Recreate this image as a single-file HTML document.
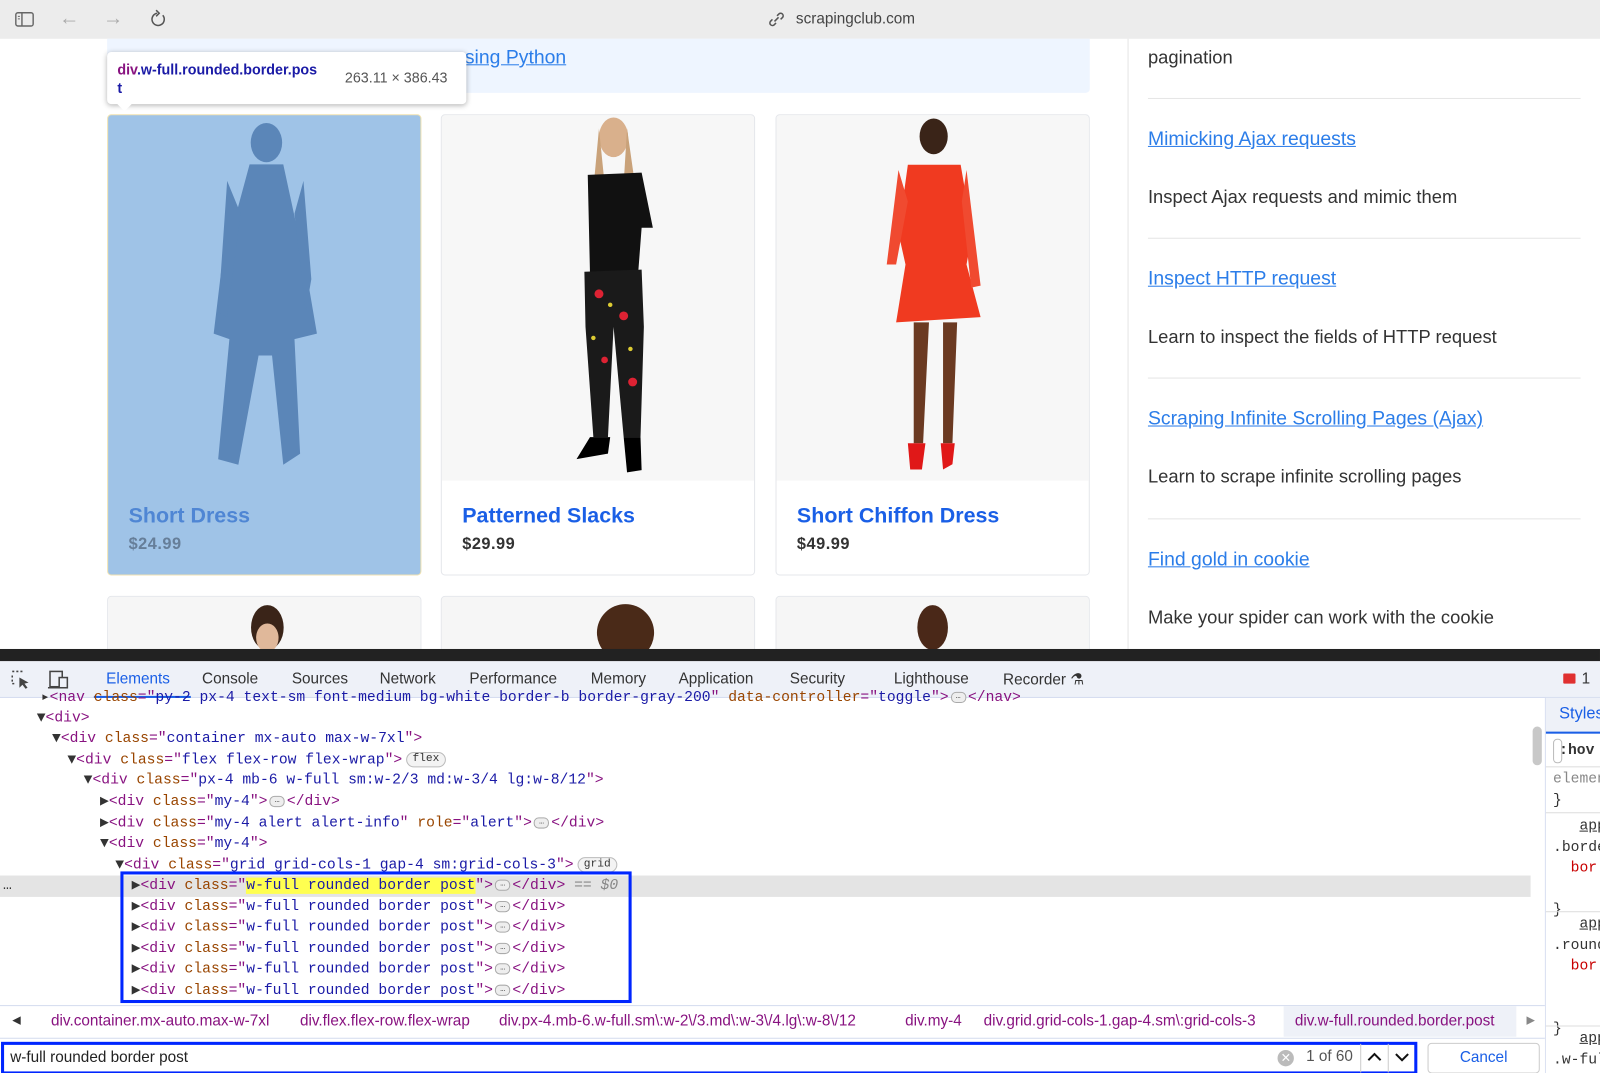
<!DOCTYPE html>
<html><head><meta charset="utf-8"><style>
*{margin:0;padding:0;box-sizing:border-box}
body{width:1600px;height:1073px;overflow:hidden;background:#fff;font-family:"Liberation Sans",sans-serif;position:relative}
#w{position:absolute;left:0;top:0;width:1568px;height:1052px;transform:scale(1.0204);transform-origin:0 0;overflow:hidden}
.a{position:absolute}
.top{left:0;top:0;width:1568px;height:38px;background:#ececec}
.card{position:absolute;border:1px solid #e5e7eb;border-radius:4px;background:#fff;overflow:hidden}
.img{position:absolute;left:0;top:0;right:0;height:358px;background:#f7f7f7}
.ttl{position:absolute;left:20px;top:381px;font-size:21px;font-weight:bold;color:#1a5fe6}
.pr{position:absolute;left:20px;top:412px;font-size:16px;font-weight:bold;color:#333;letter-spacing:.5px}
.side a{color:#2b7de9;text-decoration:underline;font-size:19px}
.sl{position:absolute;left:1125px;font-size:18px;color:#333}
.hr{position:absolute;left:1125px;width:424px;height:1px;background:#e5e5e5}
.tree{font-family:"Liberation Mono",monospace;font-size:14.4px;white-space:pre;line-height:20.5px}
.t{color:#881280}.at{color:#994500}.v{color:#1a1aa6}.g{color:#333}
.ln{position:absolute;height:20.5px}
.pill{display:inline-block;border:1px solid #bbb;border-radius:8px;font-size:11px;padding:0 5px;line-height:13px;color:#333;background:#f3f3f3;vertical-align:middle;margin-left:4px}
.dots{display:inline-block;width:15px;height:11px;border:1px solid #aaa;border-radius:5px;background:#eee;font-size:8px;line-height:7px;text-align:center;vertical-align:middle;color:#333;margin:0 2px}
.tab{position:absolute;top:657px;font-size:15px;color:#333}
.bc{position:absolute;top:992px;font-size:15px;color:#881280}
</style></head><body><div id="w">
<div class="a top"></div>
<svg class="a" style="left:14px;top:10px" width="22" height="18"><rect x="1.5" y="2.5" width="17" height="13" rx="2" fill="none" stroke="#666" stroke-width="1.4"/><line x1="7.5" y1="3" x2="7.5" y2="15" stroke="#666" stroke-width="1.4"/><line x1="3.5" y1="6" x2="5.5" y2="6" stroke="#666"/><line x1="3.5" y1="8.5" x2="5.5" y2="8.5" stroke="#666"/></svg>
<div class="a" style="left:58px;top:7px;font-size:20px;color:#aaa">←</div>
<div class="a" style="left:101px;top:7px;font-size:20px;color:#aaa">→</div>
<svg class="a" style="left:145px;top:9px" width="20" height="20"><path d="M14.5 6 A6 6 0 1 1 9 4" fill="none" stroke="#555" stroke-width="1.5"/><path d="M8 1 L11 4 L8 7" fill="none" stroke="#555" stroke-width="1.5"/></svg>
<svg class="a" style="left:752px;top:11px" width="18" height="16"><path d="M7 10 L11 6 M5 8 L3 10 a2.5 2.5 0 0 0 3.5 3.5 L8.5 11.5 M9.5 4.5 L11.5 2.5 a2.5 2.5 0 0 1 3.5 3.5 L13 8" fill="none" stroke="#555" stroke-width="1.5"/></svg>
<div class="a" style="left:780px;top:10px;font-size:15px;color:#444">scrapingclub.com</div>

<div class="a" style="left:105px;top:38px;width:963px;height:53px;background:#eef5ff;border-radius:0 0 4px 4px"></div>
<div class="a" style="left:445px;top:46px;font-size:19px;color:#2b7de9;text-decoration:underline">using Python</div>

<div class="card" style="left:105px;top:112px;width:308px;height:452px;background:#9fc3e7;border-color:#f0e2b0">
<svg width="308" height="358"><g fill="#5b86b8" transform="translate(154 0) scale(1.1 1.07) translate(-154 -10)"><ellipse cx="155" cy="35" rx="14" ry="18"/><path d="M140 55 L170 55 L190 150 L200 210 L180 215 L185 320 L170 330 L160 230 L148 230 L130 330 L112 325 L122 215 L108 210 L115 150Z"/><path d="M120 70 L112 190 L120 195 L132 100Z M188 70 L195 160 L190 190 L180 100Z"/></g></svg>
<div class="ttl" style="color:#4f86d4">Short Dress</div><div class="pr" style="color:#667e99">$24.99</div></div>
<div class="card" style="left:432px;top:112px;width:308px;height:452px">
<div class="img"><svg width="308" height="358"><g transform="translate(154 0) scale(1.1 1.08) translate(-150 -8)"><ellipse cx="163" cy="28" rx="13" ry="18" fill="#d9b08c"/><path d="M150 20 L145 75 L155 70Z M175 20 L182 70 L172 70Z" fill="#c9a27a"/><path d="M140 62 L188 60 L198 110 L188 110 L185 150 L142 152Z" fill="#111"/><path d="M137 150 L188 148 L190 200 L187 300 L172 300 L163 200 L158 300 L145 300 L138 200Z" fill="#1a1a1a"/><g fill="#d23"><circle cx="150" cy="170" r="4"/><circle cx="172" cy="190" r="4"/><circle cx="155" cy="230" r="3"/><circle cx="180" cy="250" r="4"/></g><g fill="#dc3"><circle cx="160" cy="180" r="2"/><circle cx="145" cy="210" r="2"/><circle cx="178" cy="220" r="2"/></g><path d="M142 300 L160 300 L158 315 L130 320Z M172 300 L187 300 L188 330 L175 332Z" fill="#000"/></g></svg></div>
<div class="ttl">Patterned Slacks</div><div class="pr">$29.99</div></div>
<div class="card" style="left:760px;top:112px;width:308px;height:452px">
<div class="img"><svg width="308" height="358"><g transform="translate(154 0) scale(1.15 1.03) translate(-152 -8)"><ellipse cx="152" cy="28" rx="12" ry="17" fill="#3a2418"/><path d="M130 55 L175 55 L185 120 L180 150 L192 200 L120 205 L128 150 L122 120Z" fill="#f03a20"/><path d="M122 60 L112 150 L120 150 L130 90Z M180 60 L192 170 L184 172 L176 90Z" fill="#f04a30"/><path d="M135 205 L148 205 L143 320 L135 320Z M160 205 L172 205 L168 320 L160 320Z" fill="#6b3a22"/><path d="M130 320 L145 320 L142 345 L132 345Z M158 320 L170 320 L168 340 L160 345Z" fill="#e01818"/></g></svg></div>
<div class="ttl">Short Chiffon Dress</div><div class="pr">$49.99</div></div>
<div class="card" style="left:105px;top:584px;width:308px;height:60px"><div class="img" style="background:#f6f6f6"><svg width="308" height="60"><ellipse cx="156" cy="30" rx="16" ry="22" fill="#3a2418"/><ellipse cx="156" cy="40" rx="11" ry="14" fill="#e0b89a"/></svg></div></div>
<div class="card" style="left:432px;top:584px;width:308px;height:60px"><div class="img" style="background:#f6f6f6"><svg width="308" height="60"><ellipse cx="180" cy="35" rx="28" ry="28" fill="#4a2a18"/></svg></div></div>
<div class="card" style="left:760px;top:584px;width:308px;height:60px"><div class="img" style="background:#f6f6f6"><svg width="308" height="60"><ellipse cx="153" cy="30" rx="15" ry="22" fill="#4a2818"/></svg></div></div>

<div class="a" style="left:105px;top:51px;width:352px;height:51px;background:#fff;border-radius:4px;box-shadow:0 1px 5px rgba(0,0,0,.3)"></div>
<div class="a" style="left:114px;top:101px;width:0;height:0;border-left:8px solid transparent;border-right:8px solid transparent;border-top:8px solid #fff"></div>
<div class="a" style="left:115px;top:59px;font-size:14px;font-weight:bold;line-height:18px;color:#1a1aa6"><span style="color:#881280">div</span>.w-full.rounded.border.pos<br>t</div>
<div class="a" style="left:338px;top:68px;font-size:14px;color:#555">263.11 × 386.43</div>

<div class="a" style="left:1105px;top:38px;width:1px;height:600px;background:#e5e5e5"></div>
<div class="side">
<div class="sl" style="top:46px">pagination</div>
<div class="hr" style="top:96px"></div>
<div class="sl" style="top:126px"><a>Mimicking Ajax requests</a></div>
<div class="sl" style="top:183px">Inspect Ajax requests and mimic them</div>
<div class="hr" style="top:233px"></div>
<div class="sl" style="top:263px"><a>Inspect HTTP request</a></div>
<div class="sl" style="top:320px">Learn to inspect the fields of HTTP request</div>
<div class="hr" style="top:370px"></div>
<div class="sl" style="top:400px"><a>Scraping Infinite Scrolling Pages (Ajax)</a></div>
<div class="sl" style="top:457px">Learn to scrape infinite scrolling pages</div>
<div class="hr" style="top:508px"></div>
<div class="sl" style="top:538px"><a>Find gold in cookie</a></div>
<div class="sl" style="top:595px">Make your spider can work with the cookie</div>
</div>

<div class="a" style="left:0;top:636px;width:1568px;height:12px;background:#222"></div>
<div class="a" style="left:0;top:648px;width:1568px;height:36px;background:#eef1f8;border-bottom:1px solid #d5dcef"></div>
<svg class="a" style="left:10px;top:656px" width="22" height="20"><path d="M2 2h2M6 2h2M10 2h2M2 6v2M2 10v2M2 14h2" stroke="#444" stroke-width="1.5"/><path d="M9 8 L9 18 L12 15 L15 19 L17 18 L14 14 L18 13Z" fill="#444"/></svg>
<svg class="a" style="left:46px;top:656px" width="22" height="20"><rect x="3" y="2" width="12" height="15" fill="none" stroke="#444" stroke-width="1.5"/><rect x="12" y="8" width="8" height="10" fill="#eef1f8" stroke="#444" stroke-width="1.5"/><line x1="1" y1="18" x2="12" y2="18" stroke="#444" stroke-width="1.5"/></svg>
<div class="tab" style="left:104px;color:#1a5fe6">Elements</div>
<div class="a" style="left:92px;top:682px;width:95px;height:2px;background:#1a5fe6"></div>
<div class="tab" style="left:198px">Console</div>
<div class="tab" style="left:286px">Sources</div>
<div class="tab" style="left:372px">Network</div>
<div class="tab" style="left:460px">Performance</div>
<div class="tab" style="left:579px">Memory</div>
<div class="tab" style="left:665px">Application</div>
<div class="tab" style="left:774px">Security</div>
<div class="tab" style="left:876px">Lighthouse</div>
<div class="tab" style="left:983px">Recorder ⚗</div>
<div class="a" style="left:1532px;top:660px;width:12px;height:10px;background:#e03030;border-radius:1px"></div>
<div class="a" style="left:1550px;top:657px;font-size:15px;color:#333">1</div>

<div class="a" style="left:0;top:858px;width:1500px;height:21px;background:#e4e4e4"></div>
<div class="a tree" style="left:6px;top:0">
<div class="ln" style="left:34px;top:674px"><span class="g">▸</span><span class="t">&lt;nav </span><span class="at">class</span><span class="t">="</span><span class="v">py-2 px-4 text-sm font-medium bg-white border-b border-gray-200</span><span class="t">" </span><span class="at">data-controller</span><span class="t">="</span><span class="v">toggle</span><span class="t">"&gt;</span><span class="dots">…</span><span class="t">&lt;/nav&gt;</span></div>
<div class="ln" style="left:30px;top:694px"><span class="g">▼</span><span class="t">&lt;div&gt;</span></div>
<div class="ln" style="left:45px;top:714px"><span class="g">▼</span><span class="t">&lt;div </span><span class="at">class</span><span class="t">="</span><span class="v">container mx-auto max-w-7xl</span><span class="t">"&gt;</span></div>
<div class="ln" style="left:60px;top:735px"><span class="g">▼</span><span class="t">&lt;div </span><span class="at">class</span><span class="t">="</span><span class="v">flex flex-row flex-wrap</span><span class="t">"&gt;</span><span class="pill">flex</span></div>
<div class="ln" style="left:76px;top:755px"><span class="g">▼</span><span class="t">&lt;div </span><span class="at">class</span><span class="t">="</span><span class="v">px-4 mb-6 w-full sm:w-2/3 md:w-3/4 lg:w-8/12</span><span class="t">"&gt;</span></div>
<div class="ln" style="left:92px;top:776px"><span class="g">▶</span><span class="t">&lt;div </span><span class="at">class</span><span class="t">="</span><span class="v">my-4</span><span class="t">"&gt;</span><span class="dots">…</span><span class="t">&lt;/div&gt;</span></div>
<div class="ln" style="left:92px;top:797px"><span class="g">▶</span><span class="t">&lt;div </span><span class="at">class</span><span class="t">="</span><span class="v">my-4 alert alert-info</span><span class="t">" </span><span class="at">role</span><span class="t">="</span><span class="v">alert</span><span class="t">"&gt;</span><span class="dots">…</span><span class="t">&lt;/div&gt;</span></div>
<div class="ln" style="left:92px;top:817px"><span class="g">▼</span><span class="t">&lt;div </span><span class="at">class</span><span class="t">="</span><span class="v">my-4</span><span class="t">"&gt;</span></div>
<div class="ln" style="left:107px;top:838px"><span class="g">▼</span><span class="t">&lt;div </span><span class="at">class</span><span class="t">="</span><span class="v">grid grid-cols-1 gap-4 sm:grid-cols-3</span><span class="t">"&gt;</span><span class="pill">grid</span></div>
<div class="ln" style="left:-3px;top:858px;color:#333">…</div>
<div class="ln" style="left:123px;top:858px"><span class="g">▶</span><span class="t">&lt;div </span><span class="at">class</span><span class="t">="</span><span class="v" style="background:#ffff50">w-full rounded border post</span><span class="t">"&gt;</span><span class="dots">…</span><span class="t">&lt;/div&gt;</span><span style="color:#888"> == <i>$0</i></span></div>
<div class="ln" style="left:123px;top:879px"><span class="g">▶</span><span class="t">&lt;div </span><span class="at">class</span><span class="t">="</span><span class="v">w-full rounded border post</span><span class="t">"&gt;</span><span class="dots">…</span><span class="t">&lt;/div&gt;</span></div>
<div class="ln" style="left:123px;top:899px"><span class="g">▶</span><span class="t">&lt;div </span><span class="at">class</span><span class="t">="</span><span class="v">w-full rounded border post</span><span class="t">"&gt;</span><span class="dots">…</span><span class="t">&lt;/div&gt;</span></div>
<div class="ln" style="left:123px;top:920px"><span class="g">▶</span><span class="t">&lt;div </span><span class="at">class</span><span class="t">="</span><span class="v">w-full rounded border post</span><span class="t">"&gt;</span><span class="dots">…</span><span class="t">&lt;/div&gt;</span></div>
<div class="ln" style="left:123px;top:940px"><span class="g">▶</span><span class="t">&lt;div </span><span class="at">class</span><span class="t">="</span><span class="v">w-full rounded border post</span><span class="t">"&gt;</span><span class="dots">…</span><span class="t">&lt;/div&gt;</span></div>
<div class="ln" style="left:123px;top:961px"><span class="g">▶</span><span class="t">&lt;div </span><span class="at">class</span><span class="t">="</span><span class="v">w-full rounded border post</span><span class="t">"&gt;</span><span class="dots">…</span><span class="t">&lt;/div&gt;</span></div>
</div>
<div class="a" style="left:118px;top:854px;width:501px;height:129px;border:3px solid #0026ff"></div>
<div class="a" style="left:1502px;top:712px;width:9px;height:38px;background:#c8c8c8;border-radius:5px"></div>
<div class="a" style="left:1514px;top:684px;width:1px;height:389px;background:#d5dcef"></div>

<div class="a" style="left:0;top:985px;width:1514px;height:32px;background:#fff;border-top:1px solid #d5dcef"></div>
<div class="a" style="left:12px;top:993px;font-size:11px;color:#333">◀</div>
<div class="bc" style="left:50px">div.container.mx-auto.max-w-7xl</div>
<div class="bc" style="left:294px">div.flex.flex-row.flex-wrap</div>
<div class="bc" style="left:489px">div.px-4.mb-6.w-full.sm\:w-2\/3.md\:w-3\/4.lg\:w-8\/12</div>
<div class="bc" style="left:887px">div.my-4</div>
<div class="bc" style="left:964px">div.grid.grid-cols-1.gap-4.sm\:grid-cols-3</div>
<div class="a" style="left:1258px;top:986px;width:228px;height:30px;background:#eef1f8"></div>
<div class="bc" style="left:1269px">div.w-full.rounded.border.post</div>
<div class="a" style="left:1496px;top:993px;font-size:11px;color:#888">▶</div>

<div class="a" style="left:0;top:1017px;width:1514px;height:56px;background:#fff;border-top:1px solid #d5dcef"></div>
<div class="a" style="left:1px;top:1021px;width:1388px;height:32px;border:3px solid #0026ff;background:#fff"></div>
<div class="a" style="left:10px;top:1028px;font-size:15px;color:#222">w-full rounded border post</div>
<div class="a" style="left:1252px;top:1029px;width:16px;height:16px;border-radius:50%;background:#bbb;color:#fff;font-size:12px;line-height:16px;text-align:center">✕</div>
<div class="a" style="left:1280px;top:1027px;font-size:15px;color:#555">1 of 60</div>
<div class="a" style="left:1333px;top:1023px;width:1px;height:28px;background:#ccc"></div>
<div class="a" style="left:1360px;top:1023px;width:1px;height:28px;background:#ccc"></div>
<svg class="a" style="left:1339px;top:1030px" width="16" height="12"><path d="M2 9 L8 3 L14 9" fill="none" stroke="#111" stroke-width="2"/></svg>
<svg class="a" style="left:1366px;top:1030px" width="16" height="12"><path d="M2 3 L8 9 L14 3" fill="none" stroke="#111" stroke-width="2"/></svg>
<div class="a" style="left:1399px;top:1022px;width:110px;height:30px;border:1px solid #ccc;border-radius:4px;text-align:center;font-size:15px;line-height:28px;color:#1a5fe6">Cancel</div>

<div class="a" style="left:1515px;top:684px;width:85px;height:389px;background:#fff"></div>
<div class="a" style="left:1515px;top:684px;width:85px;height:35px;background:#eef1f8;border-bottom:2px solid #1a5fe6"></div>
<div class="a" style="left:1528px;top:691px;font-size:16px;color:#1a5fe6">Styles</div>
<div class="a" style="left:1522px;top:724px;width:9px;height:24px;border:1px solid #bbb;border-radius:4px"></div>
<div class="a tree" style="left:1528px;top:726px;font-weight:bold;color:#333">:hov</div>
<div class="a" style="left:1515px;top:751px;width:85px;height:1px;background:#ddd"></div>
<div class="a tree" style="left:1522px;top:754px;color:#888">elemen<br><span style="color:#333">}</span></div>
<div class="a" style="left:1515px;top:796px;width:85px;height:1px;background:#ddd"></div>
<div class="a tree" style="left:1522px;top:800px;color:#333">   <u>app</u><br>.borde<br>  <span style="color:#c80000">bor</span><br><br>}</div>
<div class="a" style="left:1515px;top:893px;width:85px;height:1px;background:#ddd"></div>
<div class="a tree" style="left:1522px;top:896px;color:#333">   <u>app</u><br>.round<br>  <span style="color:#c80000">bor</span><br><br><br>}</div>
<div class="a" style="left:1515px;top:1005px;width:85px;height:1px;background:#ddd"></div>
<div class="a tree" style="left:1522px;top:1008px;color:#333">   <u>app</u><br>.w-ful</div>
</div></body></html>
